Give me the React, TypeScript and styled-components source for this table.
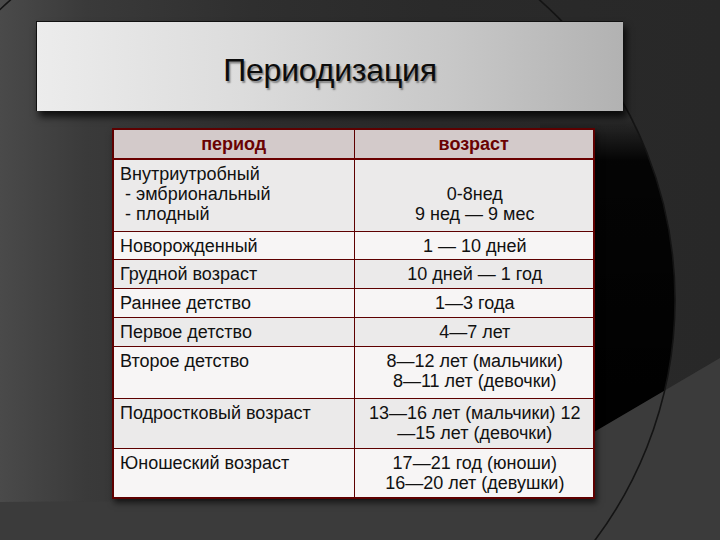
import React from "react";
import styled, { createGlobalStyle } from "styled-components";

const GlobalStyle = createGlobalStyle`
  html, body { margin: 0; padding: 0; }
  body { width: 720px; height: 540px; overflow: hidden; background: #2a2a2a; }
  * { box-sizing: border-box; }
`;

const Page = styled.div`
  position: relative;
  width: 720px;
  height: 540px;
  overflow: hidden;
  background: linear-gradient(to right, #4a4a4a 0%, #3a3a3a 12%, #2f2f2f 35%, #2a2a2a 60%, #282828 100%);
  font-family: "Liberation Sans", Arial, sans-serif;
`;

const Backdrop = styled.svg`
  position: absolute;
  left: 0;
  top: 0;
  width: 720px;
  height: 540px;
`;

const Slide = styled.div`
  position: relative;
  display: flex;
  flex-direction: column;
  padding-top: 21px;
`;

const TitleBox = styled.div`
  margin-left: 36px;
  width: 587px;
  height: 90px;
  display: flex;
  align-items: center;
  justify-content: center;
  padding-top: 8px;
  background: linear-gradient(to right, #ececec 0%, #dcdcdc 35%, #c8c8c8 70%, #b2b2b2 100%);
  border-top: 1.5px solid #111;
  border-left: 1.5px solid #111;
  box-shadow: 3px 6px 7px rgba(0, 0, 0, 0.75);
`;

const Title = styled.h1`
  margin: 0;
  font-family: "Liberation Sans", Arial, sans-serif;
  font-weight: normal;
  font-size: 32px;
  letter-spacing: -0.2px;
  color: #0c0c0c;
  text-shadow: 1.5px 1.5px 1.5px rgba(60, 60, 60, 0.55);
`;

const Table = styled.table`
  margin-top: 17px;
  margin-left: 112px;
  width: 481px;
  table-layout: fixed;
  border-collapse: collapse;
  border: 2px solid #5e0000;
  box-shadow: 2px 4px 6px rgba(0, 0, 0, 0.6);
`;

const HeadCell = styled.th`
  height: 30px;
  padding: 0 6px;
  background: #d3caca;
  color: #6a0202;
  font-weight: bold;
  font-size: 18px;
  text-align: center;
  border-right: 1px solid #5e0000;
  border-bottom: 2.5px solid #6a0000;
`;

const Row = styled.tr<{ $alt: boolean; $h: number }>`
  height: ${(p) => p.$h}px;
  background: ${(p) => (p.$alt ? "#f7f5f5" : "#ebeaea")};
`;

const Cell = styled.td<{ $center?: boolean }>`
  vertical-align: top;
  padding: 4px 4px 0 6px;
  font-size: 18px;
  line-height: 20px;
  color: #111;
  text-align: ${(p) => (p.$center ? "center" : "left")};
  border-right: 1px solid #5e0000;
  border-bottom: 1px solid #5e0000;
  white-space: pre-wrap;
`;

const rows: { period: string; age: string; h: number }[] = [
  { period: "Внутриутробный\n - эмбриональный\n - плодный", age: "\n0-8нед\n9 нед — 9 мес", h: 72 },
  { period: "Новорожденный", age: "1 — 10 дней", h: 28 },
  { period: "Грудной возраст", age: "10 дней — 1 год", h: 29 },
  { period: "Раннее детство", age: "1—3 года", h: 29 },
  { period: "Первое детство", age: "4—7 лет", h: 29 },
  { period: "Второе детство", age: "8—12 лет (мальчики)\n8—11 лет (девочки)", h: 52 },
  { period: "Подростковый возраст", age: "13—16 лет (мальчики) 12\n—15 лет (девочки)", h: 50 },
  { period: "Юношеский возраст", age: "17—21 год (юноши)\n16—20 лет (девушки)", h: 50 },
];

export default function App() {
  return (
    <>
      <GlobalStyle />
      <Page>
        <Backdrop viewBox="0 0 720 540" aria-hidden="true">
          <defs>
            <clipPath id="circ">
              <circle cx="275" cy="300" r="400" />
            </clipPath>
            <linearGradient id="shade" x1="0" y1="0" x2="0" y2="1">
              <stop offset="0" stopColor="#000" stopOpacity="0" />
              <stop offset="0.12" stopColor="#000" stopOpacity="0.9" />
              <stop offset="1" stopColor="#000" stopOpacity="1" />
            </linearGradient>
          </defs>
          <rect x="540" y="120" width="180" height="340" fill="url(#shade)" clipPath="url(#circ)" />
          <polygon points="0,502 592,498 594,432 720,358 720,540 0,540" fill="#3b3b3b" />
          <circle cx="275" cy="300" r="400" fill="none" stroke="#141414" strokeWidth="1.6" />
        </Backdrop>
        <Slide>
          <TitleBox>
            <Title>Периодизация</Title>
          </TitleBox>
          <Table>
            <colgroup>
              <col style={{ width: 241 }} />
              <col style={{ width: 240 }} />
            </colgroup>
            <thead>
              <tr>
                <HeadCell>период</HeadCell>
                <HeadCell>возраст</HeadCell>
              </tr>
            </thead>
            <tbody>
              {rows.map((r, i) => (
                <Row key={i} $alt={i % 2 === 1} $h={r.h}>
                  <Cell>{r.period}</Cell>
                  <Cell $center>{r.age}</Cell>
                </Row>
              ))}
            </tbody>
          </Table>
        </Slide>
      </Page>
    </>
  );
}
